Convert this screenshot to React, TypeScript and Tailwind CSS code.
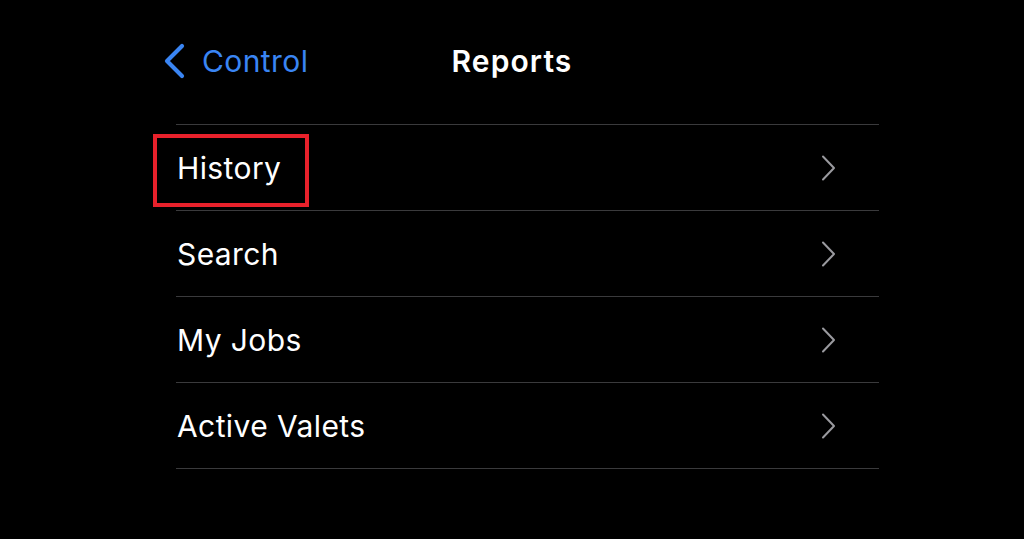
import React from "react";

const items = ["History", "Search", "My Jobs", "Active Valets"];

function BackChevron() {
  return (
    <svg width="24" height="36" viewBox="0 0 24 36" fill="none">
      <polyline
        points="20,3 5,18 20,33"
        stroke="#3a85f3"
        strokeWidth="4.2"
        strokeLinecap="round"
        strokeLinejoin="round"
      />
    </svg>
  );
}

function RowChevron() {
  return (
    <svg width="15" height="26" viewBox="0 0 15 26" fill="none">
      <polyline
        points="2,1.5 13,13 2,24.5"
        stroke="#9a9a9f"
        strokeWidth="2"
        strokeLinecap="round"
        strokeLinejoin="round"
      />
    </svg>
  );
}

export default function App() {
  return (
    <div
      className="min-h-[539px] w-full bg-black text-white"
      style={{ fontFamily: "Inter, 'Noto Sans', sans-serif" }}
    >
      <header className="grid h-[124px] grid-cols-[1fr_auto_1fr] items-center pb-[2px]">
        <div className="flex items-center pl-[162px]">
          <BackChevron />
          <span className="ml-[16px] text-[30px] leading-none tracking-[0.4px] text-[#3a85f3]">
            Control
          </span>
        </div>
        <h1 className="text-[30px] font-semibold leading-none tracking-[1.1px]">
          Reports
        </h1>
        <div />
      </header>

      <ul className="ml-[176px] w-[703px] border-t border-[#3a3a3c]">
        {items.map((item) => (
          <li
            key={item}
            className="relative flex h-[86px] items-center justify-between border-b border-[#3a3a3c] pl-[1px] pr-[43px]"
          >
            <span className="text-[30px] leading-none tracking-[0.4px]">
              {item}
            </span>
            <RowChevron />
            {item === "History" && (
              <div className="pointer-events-none absolute left-[-23px] top-[9px] h-[73px] w-[156px] border-4 border-[#e8212b]" />
            )}
          </li>
        ))}
      </ul>
    </div>
  );
}
